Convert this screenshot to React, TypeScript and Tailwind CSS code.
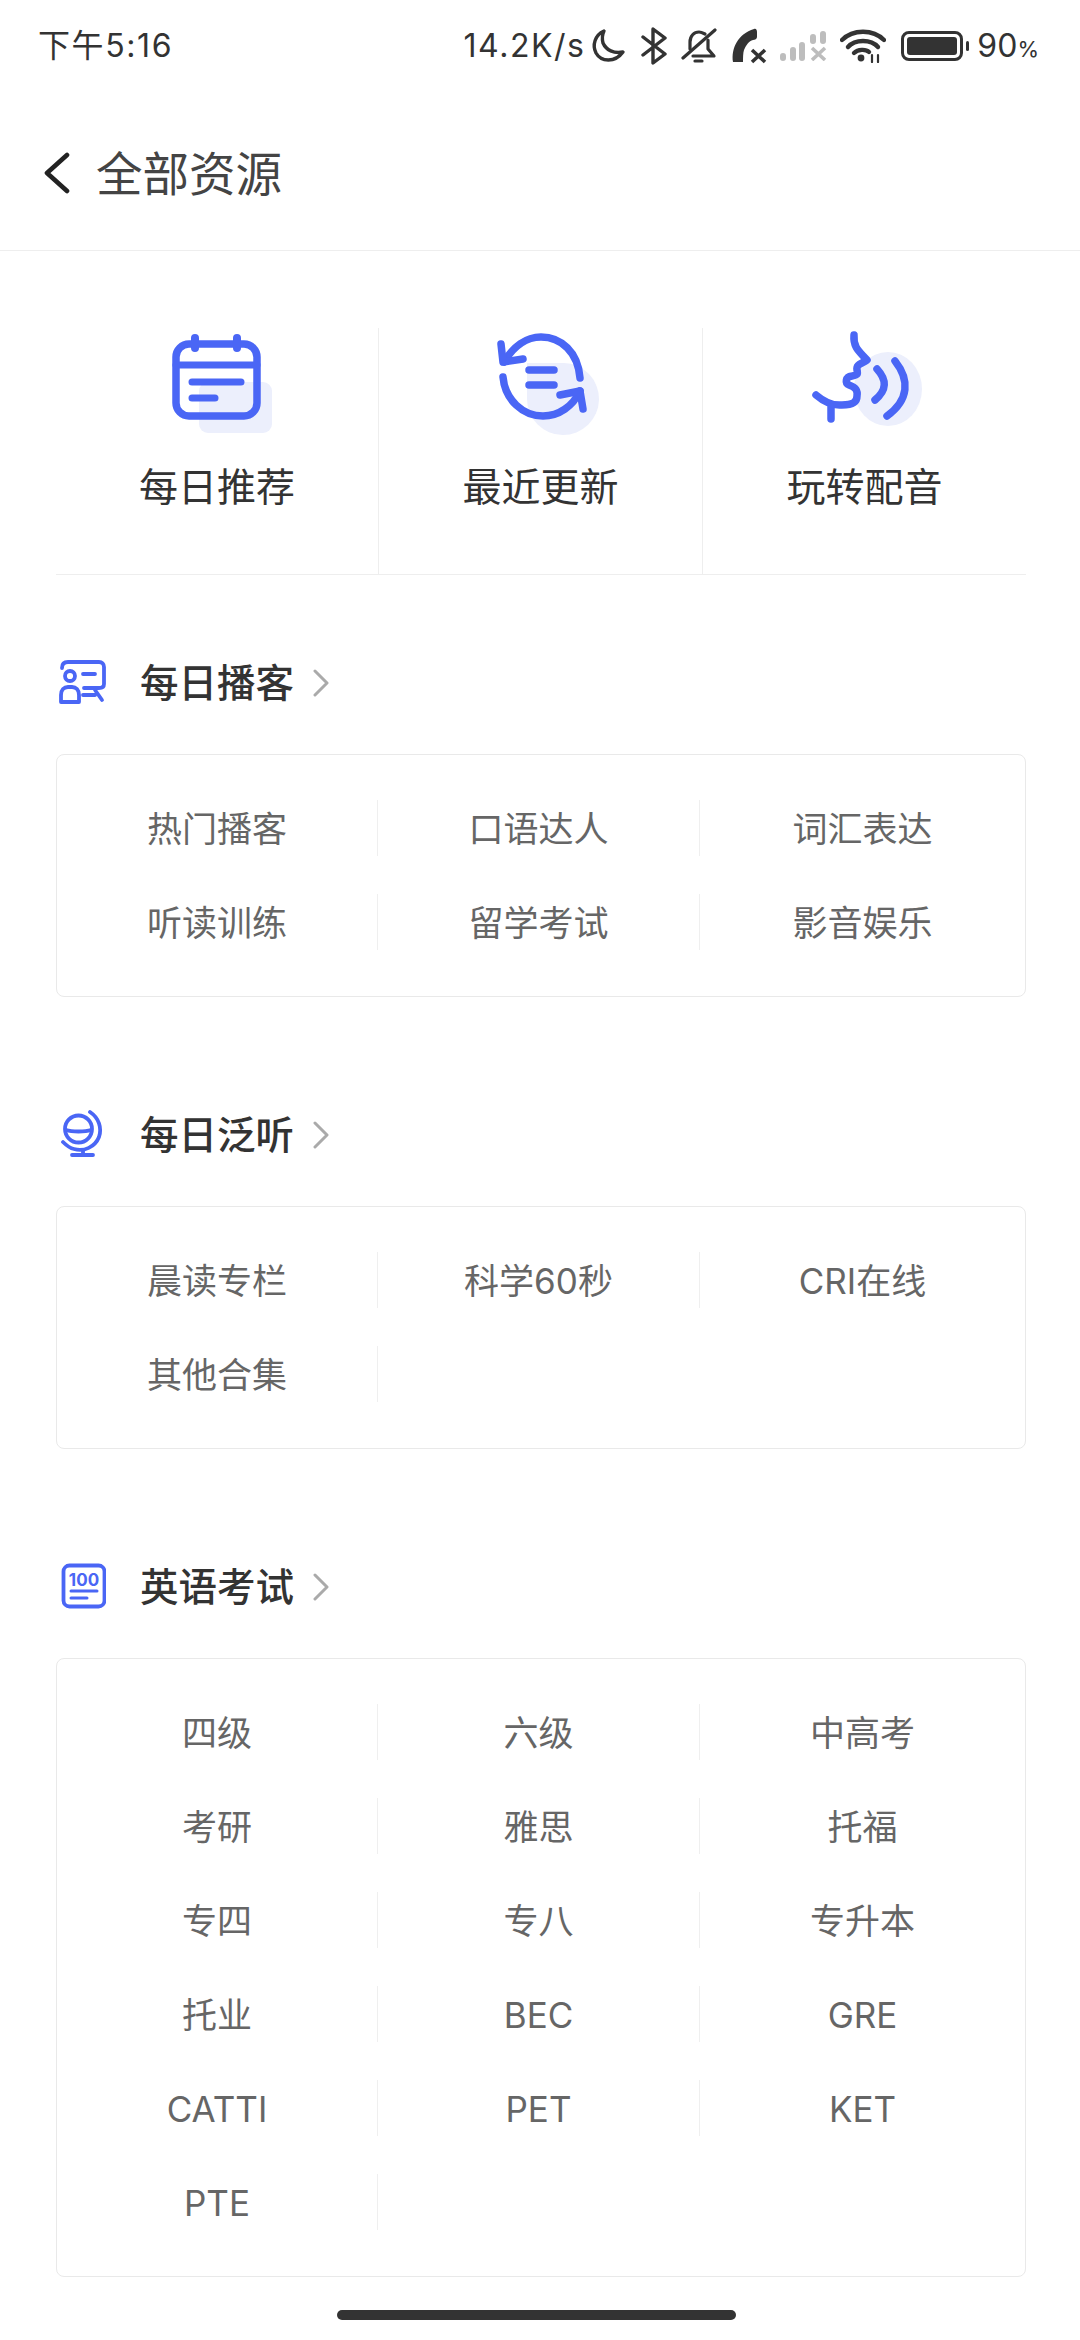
import React from 'react';

const BLUE = '#4a66f5';
const TINT = '#eceffc';

// --- Status bar icons ---

const Moon = () => (
  <svg width="36" height="36" viewBox="0 0 36 36" fill="none" stroke="#333" strokeWidth="3.4" strokeLinecap="round" strokeLinejoin="round">
    <path d="M14 3 C5 7 2 17 6 25 C11 34 25 35 33 24 C24 26 16 22 13 15 C12 11 12 7 14 3 Z" />
  </svg>
);

const Bluetooth = () => (
  <svg width="26" height="38" viewBox="0 0 26 38" fill="none" stroke="#333" strokeWidth="3.4" strokeLinecap="round" strokeLinejoin="round">
    <path d="M2 10 L24 27 L12 36 V2 L24 11 L2 28" />
  </svg>
);

const BellOff = () => (
  <svg width="36" height="36" viewBox="0 0 36 36" fill="none" stroke="#333" strokeWidth="3.2" strokeLinecap="round" strokeLinejoin="round">
    <path d="M9 21 V14 C9 8 13 4 18 4 C20 4 22 5 24 6" />
    <path d="M27 12 V21 L33 28 H12" />
    <path d="M2 30 L34 2" />
    <path d="M14 33 H21" />
  </svg>
);

const PhoneX = () => (
  <svg width="38" height="36" viewBox="0 0 38 36">
    <path d="M2 34 C0 20 7 6 23 1 C25 0 26 2 26 4 L26 9 C26 11 24 12 22 12 C18 13 15 17 13 22 C12 25 12 30 12 34 Z" fill="#333" />
    <path d="M21 22 L34 34 M34 22 L21 34" stroke="#333" strokeWidth="3.6" fill="none" />
  </svg>
);

const SignalX = () => (
  <svg width="48" height="30" viewBox="0 0 48 30" fill="none" stroke="#bdbdbd" strokeLinecap="round">
    <path d="M3 25 V27 M13 19 V27 M22 14 V27 M33 6 V10 M43 3 V10" strokeWidth="6" />
    <path d="M32 17 L45 29 M45 17 L32 29" strokeWidth="3.6" strokeLinecap="butt" />
  </svg>
);

const Wifi = () => (
  <svg width="46" height="34" viewBox="0 0 46 34" fill="none" stroke="#333" strokeWidth="4.4" strokeLinecap="round">
    <path d="M2 11 C13 0 33 0 44 11" />
    <path d="M8 18 C15 10 31 10 38 18" />
    <path d="M14 24 C18 20 26 20 29 23" />
    <circle cx="21" cy="29" r="3.4" fill="#333" stroke="none" />
    <path d="M32 26 V33 M38 26 V33" strokeWidth="2.2" />
  </svg>
);

const Battery = () => (
  <div className="flex items-center gap-[3px]">
    <div className="w-[62px] h-[30px] rounded-[8px] border-[3px] border-[#333] p-[3px]">
      <div className="w-full h-full rounded-[3px] bg-[#333]" />
    </div>
    <div className="w-[3px] h-[10px] rounded-full bg-[#333]" />
  </div>
);

// --- Top entry icons ---

const CalendarIcon = () => (
  <svg width="120" height="110" viewBox="157 326 120 110" fill="none" stroke={BLUE} strokeLinecap="round">
    <rect x="199" y="380" width="73" height="51" rx="9" fill={TINT} stroke="none" />
    <rect x="176" y="342" width="81" height="72" rx="13" strokeWidth="7.5" />
    <path d="M176 363 H257" strokeWidth="7" />
    <path d="M195 336 V346 M237 336 V346" strokeWidth="8" />
    <path d="M192 380 H241 M192 396 H215" strokeWidth="7" />
  </svg>
);

const RefreshIcon = () => (
  <svg width="120" height="110" viewBox="480 326 120 110" fill="none" stroke={BLUE} strokeWidth="7.5" strokeLinecap="round" strokeLinejoin="round">
    <path d="M526 361 H563 A36 36 0 1 1 526 397 Z" fill={TINT} stroke="none" />
    <path d="M579 376 C577 350 560 335 540 335 C525 335 512 345 503 360" />
    <path d="M500 342 L502 360 L522 357" />
    <path d="M502 375 C504 398 522 414 542 414 C558 414 572 404 579 389" />
    <path d="M559 393 L579 389 L582 407" />
    <path d="M528 368 H553 M528 383 H553" />
  </svg>
);

const VoiceIcon = () => (
  <svg width="120" height="110" viewBox="803 326 120 110" fill="none" stroke={BLUE} strokeWidth="7.5" strokeLinecap="round" strokeLinejoin="round">
    <ellipse cx="886" cy="387" rx="34" ry="37" fill={TINT} stroke="none" />
    <path d="M852 333 C851 346 858 350 865 358 C860 362 854 362 855 368 C856 372 856 373 850 374 C843 375 843 381 847 383 C853 385 856 388 855 394 C855 401 850 403 840 403 C829 404 821 399 814 393" />
    <path d="M829 405 V417" />
    <path d="M875 367 C885 378 885 388 873 398" />
    <path d="M893 359 C908 378 907 398 885 414" />
  </svg>
);

// --- Section icons ---

const PodcastIcon = () => (
  <svg width="50" height="50" viewBox="56 658 50 50" fill="none" stroke={BLUE} strokeWidth="3.8" strokeLinecap="round" strokeLinejoin="round">
    <path d="M62 668 C62 664 64 662 68 662 H99 C102 662 104 664 104 667 V684 C104 687 102 688 99 688 H84" />
    <circle cx="70" cy="676" r="5" />
    <path d="M83 674 H95 M83 695 H95 M95 690 L102 700" />
    <path d="M61 702 V695 C61 690 64 687 68 687 H72 C76 687 79 690 79 695 V702 Z" />
  </svg>
);

const GlobeIcon = () => (
  <svg width="50" height="50" viewBox="56 1110 50 50" fill="none" stroke={BLUE} strokeWidth="3.8" strokeLinecap="round" strokeLinejoin="round">
    <circle cx="78.5" cy="1129" r="13.5" />
    <path d="M66 1130 C72 1132 85 1132 91 1130" />
    <path d="M90 1112 C99 1118 102 1128 99 1137 C95 1147 84 1152 74 1149 C69 1148 66 1145 63 1142" />
    <path d="M83 1150 V1155 M72 1155 H93" />
  </svg>
);

const ExamIcon = () => (
  <svg width="50" height="50" viewBox="56 1562 50 50" fill="none" stroke={BLUE} strokeLinecap="round">
    <rect x="63.5" y="1565.5" width="41" height="41" rx="6" strokeWidth="3.8" />
    <text x="84" y="1586" textAnchor="middle" fontSize="17" fontWeight="700" fill={BLUE} stroke="none" fontFamily="Inter, sans-serif">100</text>
    <path d="M71 1591 H97 M71 1598 H87" strokeWidth="3" />
  </svg>
);

const SectionChevron = () => (
  <svg width="18" height="28" viewBox="0 0 18 28" fill="none" stroke="#aaa" strokeWidth="3" strokeLinecap="round" strokeLinejoin="round">
    <path d="M3 2 L15 14 L3 26" />
  </svg>
);

// --- Parts ---

const entries = [
  { label: '每日推荐', icon: <CalendarIcon /> },
  { label: '最近更新', icon: <RefreshIcon /> },
  { label: '玩转配音', icon: <VoiceIcon /> },
];

const Section = ({ title, icon, items, className }: { title: string; icon: React.ReactNode; items: string[]; className: string }) => (
  <section className={className}>
    <div className="flex items-center h-[50px]">
      <div className="w-[50px] mr-[34px] flex">{icon}</div>
      <h2 className="text-[38.5px] leading-[50px] font-medium text-[#333]">{title}</h2>
      <div className="ml-[18px] flex"><SectionChevron /></div>
    </div>
    <div className="mt-[46px] border border-[#e9e9e9] rounded-[8px] grid grid-cols-[321px_322px_1fr] gap-y-[38px] pt-[45px] pb-[46px]">
      {items.map((item, i) => (
        <div
          key={item}
          className={`h-[56px] pt-[2px] flex items-center justify-center text-[35px] text-[#666] ${i % 3 !== 2 ? 'border-r border-[#efefef]' : ''}`}
        >
          {item}
        </div>
      ))}
    </div>
  </section>
);

export default function App() {
  return (
    <div
      className="w-[1080px] h-[2340px] bg-white relative overflow-hidden"
      style={{ fontFamily: 'Inter, "Noto Sans CJK SC", sans-serif' }}
    >
      {/* Status bar */}
      <div className="h-[92px] flex items-center justify-between pl-[38px] pr-[41px] text-[#333]">
        <span className="text-[32px] leading-none tracking-[1.6px]">下午5:16</span>
        <div className="flex items-center">
          <span className="text-[32px] leading-none tracking-[1.5px]">14.2K/s</span>
          <div className="ml-[5px] flex"><Moon /></div>
          <div className="ml-[15px] flex"><Bluetooth /></div>
          <div className="ml-[14px] flex"><BellOff /></div>
          <div className="ml-[14px] flex"><PhoneX /></div>
          <div className="ml-[11px] flex"><SignalX /></div>
          <div className="ml-[12px] flex"><Wifi /></div>
          <div className="ml-[15px] flex"><Battery /></div>
          <span className="ml-[8px] text-[32px] leading-none">90<span className="text-[22px]">%</span></span>
        </div>
      </div>

      {/* Title bar */}
      <header className="h-[159px] pt-[3px] border-b border-[#eeeeee] flex items-center pl-[44px]">
        <svg width="26" height="42" viewBox="0 0 26 42" fill="none" stroke="#222" strokeWidth="4.6" strokeLinecap="round" strokeLinejoin="round">
          <path d="M23 3 L3 21 L23 39" />
        </svg>
        <h1 className="ml-[26px] pt-[3px] text-[46.5px] leading-none text-[#444]">全部资源</h1>
      </header>

      <main className="pl-[56px] pr-[54px]">
        {/* Entries */}
        <div className="mt-[77px] h-[247px] border-b border-[#eeeeee] grid grid-cols-[323px_324px_1fr]">
          {entries.map((e, i) => (
            <div key={e.label} className={`flex flex-col items-center ${i < 2 ? 'border-r border-[#eeeeee]' : ''}`}>
              {e.icon}
              <span className="mt-[24px] text-[39px] leading-[50px] text-[#333]">{e.label}</span>
            </div>
          ))}
        </div>

        <Section
          className="mt-[83px]"
          title="每日播客"
          icon={<PodcastIcon />}
          items={['热门播客', '口语达人', '词汇表达', '听读训练', '留学考试', '影音娱乐']}
        />
        <Section
          className="mt-[113px]"
          title="每日泛听"
          icon={<GlobeIcon />}
          items={['晨读专栏', '科学60秒', 'CRI在线', '其他合集']}
        />
        <Section
          className="mt-[113px]"
          title="英语考试"
          icon={<ExamIcon />}
          items={['四级', '六级', '中高考', '考研', '雅思', '托福', '专四', '专八', '专升本', '托业', 'BEC', 'GRE', 'CATTI', 'PET', 'KET', 'PTE']}
        />
      </main>

      {/* Home indicator */}
      <div className="absolute left-[337px] top-[2310px] w-[399px] h-[10px] rounded-full bg-[#333]" />
    </div>
  );
}
